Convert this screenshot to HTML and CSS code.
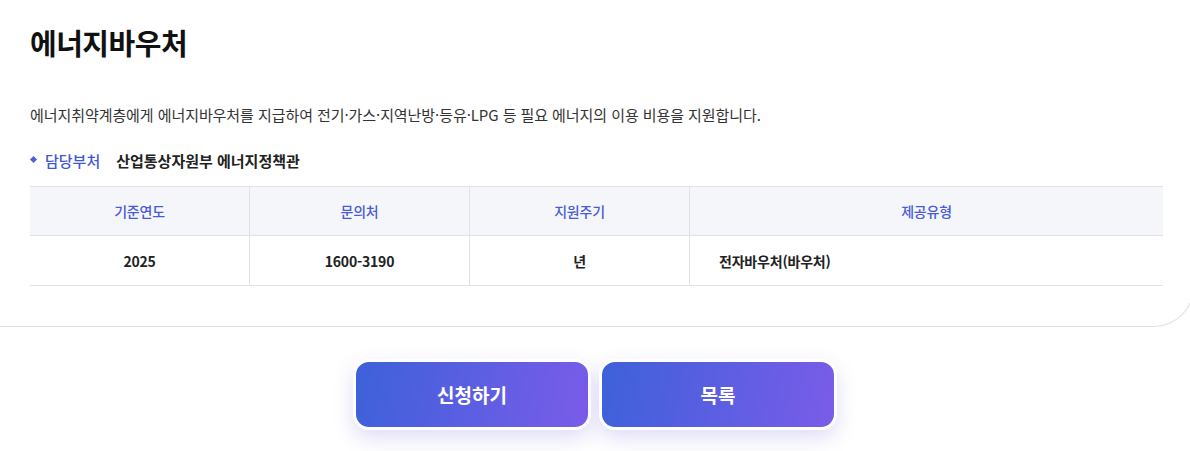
FILE: index.html
```html
<!DOCTYPE html>
<html lang="ko">
<head>
<meta charset="utf-8">
<title>에너지바우처</title>
<link rel="stylesheet" href="styles.css">
</head>
<body>
<div class="card">
  <h1 class="title">에너지바우처</h1>
  <p class="desc">에너지취약계층에게 에너지바우처를 지급하여 전기·가스·지역난방·등유·LPG 등 필요 에너지의 이용 비용을 지원합니다.</p>
  <div class="dept">
    <span class="dept-label">담당부처</span>
    <span class="dept-value">산업통상자원부 에너지정책관</span>
  </div>
  <table class="info">
    <thead>
      <tr>
        <th class="c1">기준연도</th>
        <th class="c2">문의처</th>
        <th class="c3">지원주기</th>
        <th class="c4">제공유형</th>
      </tr>
    </thead>
    <tbody>
      <tr>
        <td>2025</td>
        <td>1600-3190</td>
        <td>년</td>
        <td class="left">전자바우처(바우처)</td>
      </tr>
    </tbody>
  </table>
</div>
<div class="actions">
  <button class="btn">신청하기</button>
  <button class="btn">목록</button>
</div>
</body>
</html>
```

FILE: styles.css
```css
html {
  overflow: hidden;
}
body {
  margin: 0;
  padding: 0 0 40px 0;
  width: 1190px;
  background: #ffffff;
  font-family: "Noto Sans CJK KR", "Noto Sans", sans-serif;
  color: #222;
}
.card {
  box-sizing: border-box;
  width: 1194px;
  padding: 20px 30px 40px 30px;
  border-bottom: 1px solid #e1e1e6;
  border-right: 1px solid #e1e1e6;
  border-bottom-right-radius: 40px;
  background: #fff;
}
.title {
  margin: 0;
  font-size: 29px;
  font-weight: 700;
  line-height: 44px;
  letter-spacing: -0.5px;
  color: #111;
}
.desc {
  margin: 40px 0 0 0;
  font-size: 15px;
  line-height: 22px;
  color: #333;
  letter-spacing: -0.07px;
}
.dept {
  display: flex;
  align-items: center;
  margin-top: 22px;
  height: 24px;
  font-size: 15px;
}
.dept-label {
  position: relative;
  padding-left: 15px;
  color: #3f56d6;
  font-weight: 500;
  margin-right: 16px;
}
.dept-label::before {
  content: "";
  position: absolute;
  left: 1px;
  top: 50%;
  width: 5px;
  height: 5px;
  margin-top: -3px;
  background: #4a63dc;
  transform: rotate(45deg);
}
.dept-value {
  font-weight: 700;
  color: #222;
}
.info {
  margin-top: 14px;
  width: 100%;
  border-collapse: collapse;
  font-size: 14px;
  letter-spacing: -0.2px;
}
.info th {
  height: 48px;
  padding: 0;
  background: #f5f6fa;
  color: #4a5bd8;
  font-weight: 500;
  border-top: 1px solid #e2e2e6;
  border-bottom: 1px solid #e2e2e6;
}
.info td {
  height: 49px;
  padding: 0;
  text-align: center;
  font-weight: 700;
  color: #222;
  border-bottom: 1px solid #e2e2e6;
}
.info th + th, .info td + td {
  border-left: 1px solid #e2e2e6;
}
.info .c1 { width: 219px; }
.info .c2 { width: 219px; }
.info .c3 { width: 219px; }
.info td.left {
  text-align: left;
  padding-left: 29px;
}
.actions {
  display: flex;
  justify-content: center;
  gap: 8px;
  margin-top: 32px;
}
.btn {
  box-sizing: border-box;
  width: 238px;
  height: 71px;
  border: 3px solid #fff;
  border-radius: 16px;
  background: linear-gradient(100deg, #3d61d9 0%, #7a5ce9 100%);
  color: #fff;
  font-family: "Noto Sans CJK KR", "Noto Sans", sans-serif;
  font-size: 19px;
  font-weight: 700;
  letter-spacing: 0;
  box-shadow: 0 8px 20px rgba(110, 100, 220, 0.22);
  cursor: pointer;
}
```
